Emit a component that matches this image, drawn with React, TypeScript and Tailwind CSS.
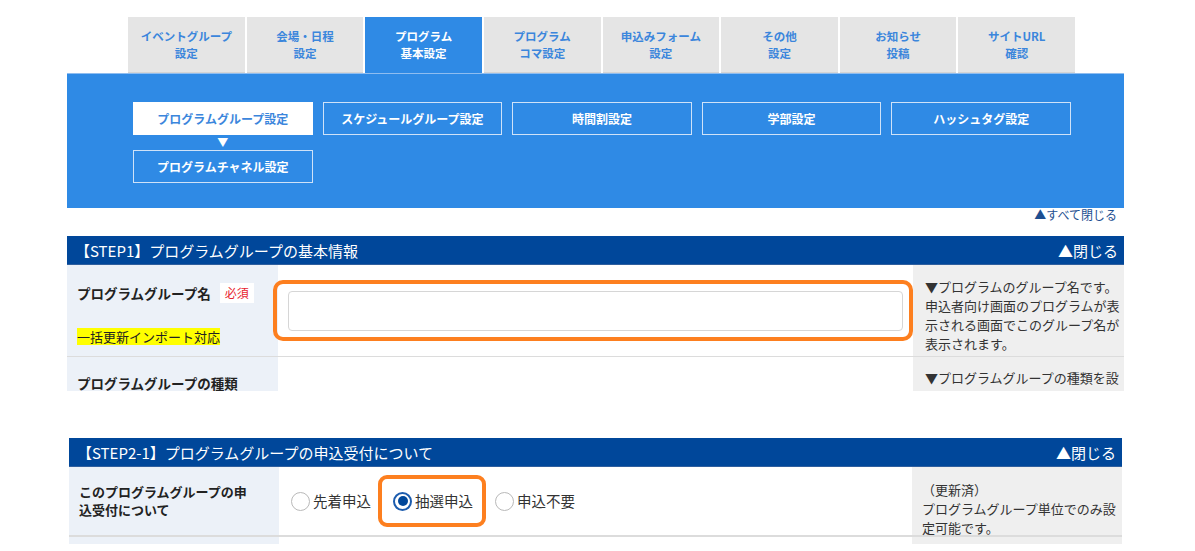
const tabs = [
    ["イベントグループ", "設定"],
    ["会場・日程", "設定"],
    ["プログラム", "基本設定"],
    ["プログラム", "コマ設定"],
    ["申込みフォーム", "設定"],
    ["その他", "設定"],
    ["お知らせ", "投稿"],
    ["サイトURL", "確認"],
];

const subNav = ["プログラムグループ設定", "スケジュールグループ設定", "時間割設定", "学部設定", "ハッシュタグ設定"];

function SectionHeader({ title }: { title: string }) {
    return (
        <div className="h-[29px] bg-[#00479a] flex items-center justify-between pl-[8px] pr-[6px] text-white text-[15px] leading-none border-b border-[#2f5f9e]">
            <span>{title}</span>
            <span>▲閉じる</span>
        </div>
    );
}

function Radio({ label, checked }: { label: string; checked?: boolean }) {
    return (
        <label className="relative flex items-center gap-[3px] text-[14.5px] text-[#333]">
            {checked ? (
                <span className="w-[19px] h-[19px] rounded-full border-2 border-[#1c5cae] flex items-center justify-center bg-white">
                    <span className="w-[10px] h-[10px] rounded-full bg-[#00479a]"></span>
                </span>
            ) : (
                <span className="w-[19px] h-[19px] rounded-full border-[1.5px] border-[#b9b9b9] bg-white"></span>
            )}
            {label}
            {checked && (
                <span className="absolute left-[-15px] right-[-13px] top-1/2 -translate-y-1/2 h-[52px] border-4 border-[#fd7f1f] rounded-[9px]"></span>
            )}
        </label>
    );
}

export default function App() {
    return (
        <div className="w-[1195px] h-[551px] bg-white overflow-hidden font-['Noto_Sans_CJK_JP','Noto_Sans',sans-serif]">
            <div className="h-[391px] overflow-hidden pt-[17px]">
                <div className="ml-[67px] w-[1057px]">
                    <div className="ml-[61px] w-[947px] h-[56px] grid grid-cols-8 gap-[2px]">
                        {tabs.map((t, i) => (
                            <div
                                key={i}
                                className={
                                    i === 2
                                        ? "bg-[#2f8ae5] text-white flex flex-col items-center justify-center text-[11.5px] font-bold leading-[17px]"
                                        : "bg-[#e5e5e5] text-[#3b86dc] flex flex-col items-center justify-center text-[11.5px] font-bold leading-[17px] border-b border-[#d4d4d4]"
                                }
                            >
                                <span>{t[0]}</span>
                                <span>{t[1]}</span>
                            </div>
                        ))}
                    </div>
                    <div className="h-[135px] bg-[#2f8ae5] border-t border-[#8fbdf0] pt-[28px] pl-[66px]">
                        <div className="w-[938px] grid grid-cols-5 gap-x-[10px]">
                            {subNav.map((s, i) => (
                                <div
                                    key={i}
                                    className={
                                        i === 0
                                            ? "h-[33px] bg-white border border-white text-[#3b86dc] flex items-center justify-center text-[12px] font-bold"
                                            : "h-[33px] border border-[#cfe2f8] text-white flex items-center justify-center text-[12px] font-bold"
                                    }
                                >
                                    {s}
                                </div>
                            ))}
                            <div className="h-[15px] flex items-center justify-center text-white text-[11px] leading-none">▼</div>
                            <div className="col-span-4"></div>
                            <div className="h-[33px] border border-[#cfe2f8] text-white flex items-center justify-center text-[12px] font-bold">
                                プログラムチャネル設定
                            </div>
                        </div>
                    </div>
                    <div className="h-[28px] flex justify-end pr-[7px] text-[12px] leading-[14px] text-[#1d4f91]">
                        ▲すべて閉じる
                    </div>
                    <SectionHeader title="【STEP1】プログラムグループの基本情報" />
                    <div className="flex h-[92px] border-b border-[#dcdcdc]">
                        <div className="w-[211px] bg-[#ecf1f8] pl-[10px] pt-[18px]">
                            <div className="flex items-center gap-[9px] h-[20px]">
                                <span className="text-[13.5px] font-bold text-[#222]">プログラムグループ名</span>
                                <span className="bg-white text-[#e8242f] text-[12px] px-[5px] leading-[20px]">必須</span>
                            </div>
                            <div className="mt-[20px]">
                                <span className="bg-[#ffff00] text-[13px] leading-[17px] text-[#222] inline-block">一括更新インポート対応</span>
                            </div>
                        </div>
                        <div className="flex-1 flex items-center px-[10px]">
                            <div className="relative w-full">
                                <div className="h-[40px] w-full border border-[#d6d6d6] rounded-[4px] bg-white"></div>
                                <span className="absolute left-[-15px] right-[-10px] top-[-11px] bottom-[-10px] border-4 border-[#fd7f1f] rounded-[10px]"></span>
                            </div>
                        </div>
                        <div className="w-[211px] bg-[#efefef] pl-[12px] pr-[4px] pt-[12px] text-[13px] leading-[19px] text-[#333]">
                            ▼プログラムのグループ名です。申込者向け画面のプログラムが表示される画面でこのグループ名が表示されます。
                        </div>
                    </div>
                    <div className="flex h-[60px]">
                        <div className="w-[211px] bg-[#ecf1f8] pl-[10px] pt-[13px]">
                            <span className="text-[13.5px] leading-[20px] font-bold text-[#222]">プログラムグループの種類</span>
                        </div>
                        <div className="flex-1"></div>
                        <div className="w-[211px] bg-[#efefef] pl-[12px] pr-[4px] pt-[11px] text-[13px] leading-[19px] text-[#333] whitespace-nowrap">
                            ▼プログラムグループの種類を設
                        </div>
                    </div>
                </div>
            </div>
            <div className="ml-[69px] w-[1053px] pt-[47px]">
                <SectionHeader title="【STEP2-1】プログラムグループの申込受付について" />
                <div className="flex h-[70px] border-b-2 border-[#dcdcdc]">
                    <div className="w-[210px] bg-[#ecf1f8] pl-[10px] flex items-center">
                        <span className="text-[13px] leading-[18px] font-bold text-[#222]">
                            このプログラムグループの申
                            <br />
                            込受付について
                        </span>
                    </div>
                    <div className="flex-1 flex items-center pl-[12px] gap-[22px]">
                        <Radio label="先着申込" />
                        <Radio label="抽選申込" checked />
                        <Radio label="申込不要" />
                    </div>
                    <div className="w-[210px] bg-[#efefef] pl-[10px] pr-[4px] pt-[13px] text-[13px] leading-[19px] text-[#333]">
                        （更新済）
                        <br />
                        プログラムグループ単位でのみ設定可能です。
                    </div>
                </div>
                <div className="flex h-[7px]">
                    <div className="w-[210px] bg-[#ecf1f8]"></div>
                    <div className="flex-1"></div>
                    <div className="w-[210px] bg-[#efefef]"></div>
                </div>
            </div>
        </div>
    );
}
